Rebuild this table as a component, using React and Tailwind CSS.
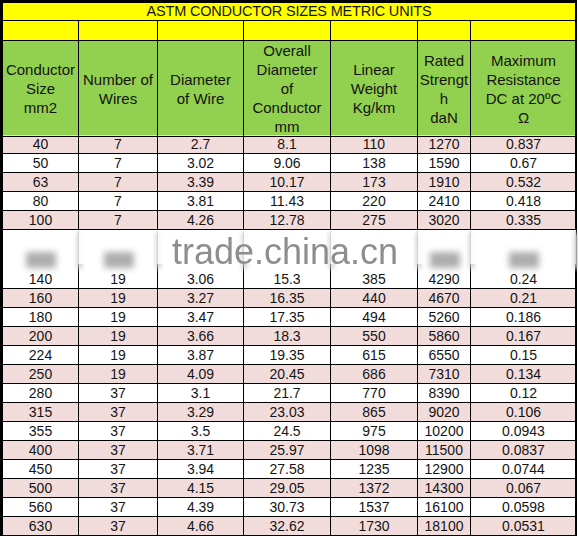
import React from 'react';

const cols = 'grid grid-cols-[76px_79px_86px_87px_87px_53px_105px]';

const top = [
    ['40', '7', '2.7', '8.1', '110', '1270', '0.837'],
    ['50', '7', '3.02', '9.06', '138', '1590', '0.67'],
    ['63', '7', '3.39', '10.17', '173', '1910', '0.532'],
    ['80', '7', '3.81', '11.43', '220', '2410', '0.418'],
    ['100', '7', '4.26', '12.78', '275', '3020', '0.335'],
];

const bottom = [
    ['160', '19', '3.27', '16.35', '440', '4670', '0.21'],
    ['180', '19', '3.47', '17.35', '494', '5260', '0.186'],
    ['200', '19', '3.66', '18.3', '550', '5860', '0.167'],
    ['224', '19', '3.87', '19.35', '615', '6550', '0.15'],
    ['250', '19', '4.09', '20.45', '686', '7310', '0.134'],
    ['280', '37', '3.1', '21.7', '770', '8390', '0.12'],
    ['315', '37', '3.29', '23.03', '865', '9020', '0.106'],
    ['355', '37', '3.5', '24.5', '975', '10200', '0.0943'],
    ['400', '37', '3.71', '25.97', '1098', '11500', '0.0837'],
    ['450', '37', '3.94', '27.58', '1235', '12900', '0.0744'],
    ['500', '37', '4.15', '29.05', '1372', '14300', '0.067'],
    ['560', '37', '4.39', '30.73', '1537', '16100', '0.0598'],
    ['630', '37', '4.66', '32.62', '1730', '18100', '0.0531'],
];

const headers = [
    ['Conductor', 'Size', 'mm2'],
    ['Number of', 'Wires'],
    ['Diameter', 'of Wire'],
    ['Overall', 'Diameter', 'of', 'Conductor', 'mm'],
    ['Linear', 'Weight', 'Kg/km'],
    ['Rated', 'Strengt', 'h', 'daN'],
    ['Maximum', 'Resistance', 'DC at 20ºC', 'Ω'],
];

// which columns get a smudge under the watermark
const smudge = [true, true, false, false, false, true, true];

function Row({ cells, pink }) {
    return (
        <div className={`${cols} h-[19px] ${pink ? 'bg-[#f2dcdb]' : 'bg-white'}`}>
            {cells.map((c, i) => (
                <div
                    key={i}
                    className={`border-b border-black text-center leading-[18px] ${i < 6 ? 'border-r' : ''}`}
                >
                    {c}
                </div>
            ))}
        </div>
    );
}

export default function App() {
    return (
        <div className="w-[578px] h-[536px] bg-white overflow-hidden font-['Liberation_Sans',Arial,sans-serif] text-[14px] text-[#141414]">
            <div className="w-[577px] border-l-[3px] border-t-[3px] border-r-2 border-black">
                {/* Title */}
                <div className="h-[18px] bg-[#ffff00] border-b border-black text-center text-[14.5px] leading-[17px] tracking-[-0.2px]">
                    ASTM CONDUCTOR SIZES METRIC UNITS
                </div>

                {/* Empty yellow row */}
                <div className={`${cols} h-[20px] bg-[#ffff00]`}>
                    {headers.map((_, i) => (
                        <div key={i} className={`border-b border-black ${i < 6 ? 'border-r' : ''}`} />
                    ))}
                </div>

                {/* Header */}
                <div className={`${cols} h-[94px] bg-[#92d050] text-[15px] leading-[19px]`}>
                    {headers.map((lines, i) => (
                        <div
                            key={i}
                            className={`border-b border-black flex flex-col items-center justify-center text-center whitespace-nowrap ${i < 6 ? 'border-r' : ''}`}
                        >
                            {lines.map((l, j) => (
                                <span key={j}>{l}</span>
                            ))}
                        </div>
                    ))}
                </div>

                {top.map((r, i) => (
                    <Row key={r[0]} cells={r} pink={i % 2 === 0} />
                ))}

                {/* Row 140 under the watermark */}
                <div className="relative">
                    <div className={`${cols} h-[59px] bg-white`}>
                        {['140', '19', '3.06', '15.3', '385', '4290', '0.24'].map((c, i) => (
                            <div
                                key={i}
                                className={`border-b border-black flex items-end justify-center leading-[18px] ${i < 6 ? 'border-r' : ''}`}
                            >
                                {c}
                            </div>
                        ))}
                    </div>

                    {/* watermark overlay */}
                    <div className={`absolute inset-0 ${cols}`}>
                        {smudge.map((s, i) => (
                            <div key={i} className="relative flex flex-col">
                                <div className="h-[34px] bg-white/85 flex items-end justify-center">
                                    {s && <div className="w-[30px] h-[16px] -mb-[4px] bg-[#999999] blur-[3px] opacity-80" />}
                                </div>
                                <div className="absolute right-[-3px] top-[3px] w-[5px] h-[36px] bg-[#d0d0d0] blur-[2px]" />
                            </div>
                        ))}
                    </div>
                    <div className="absolute inset-x-0 top-0 h-[44px] flex items-center justify-center pr-[8px]">
                        <span className="text-[36px] leading-[44px] text-[#8e8e8e] blur-[0.6px]">trade.china.cn</span>
                    </div>
                </div>

                {bottom.map((r, i) => (
                    <Row key={r[0]} cells={r} pink={i % 2 === 0} />
                ))}
            </div>
        </div>
    );
}
